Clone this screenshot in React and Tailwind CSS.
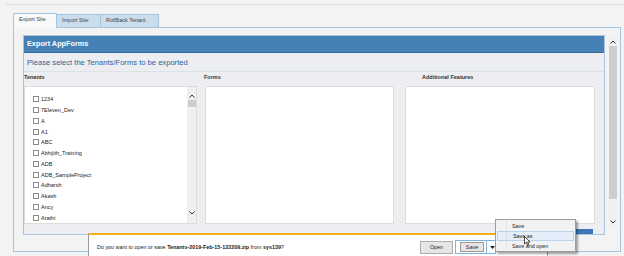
import React from "react";

const tenants = [
  "1234",
  "7Eleven_Dev",
  "A",
  "A1",
  "ABC",
  "Abhijith_Training",
  "ADB",
  "ADB_SampleProject",
  "Adharsh",
  "Akash",
  "Ancy",
  "Arathi",
];

function ChevUp({ className = "" }) {
  return (
    <svg width="6" height="4" viewBox="0 0 6 4" className={className}>
      <path d="M0.5 3.5 L3 1 L5.5 3.5" fill="none" stroke="#333" strokeWidth="1" />
    </svg>
  );
}
function ChevDown({ className = "" }) {
  return (
    <svg width="6" height="4" viewBox="0 0 6 4" className={className}>
      <path d="M0.5 0.5 L3 3 L5.5 0.5" fill="none" stroke="#333" strokeWidth="1" />
    </svg>
  );
}

export default function App() {
  return (
    <div className="relative w-[624px] h-[256px] overflow-hidden bg-[#f3f3f3] font-['Liberation_Sans',Arial,sans-serif] text-[#333]">
      <div className="ml-[6px] mt-[4px] h-px bg-[#dcdcdc]" />
      <div className="ml-[13px] mt-[8px]">
        {/* tabs */}
        <div className="relative z-10 flex items-end h-[15px]">
          <div className="w-[44px] h-[15px] border border-b-0 border-[#a3c6e0] bg-[#f8f8f8] pl-[5px] pt-[2px] text-[5.5px] leading-[7px] text-[#444]">
            Export Site
          </div>
          <div className="w-[44px] h-[14px] border border-l-0 border-[#a3c6e0] bg-[#c9dded] pl-[5px] pt-[2px] text-[5.5px] leading-[7px] text-[#444]">
            Import Site
          </div>
          <div className="w-[58px] h-[14px] border border-l-0 border-[#a3c6e0] bg-[#c9dded] pl-[5px] pt-[2px] text-[5.5px] leading-[7px] text-[#444]">
            RollBack Tenant
          </div>
        </div>
        {/* tab content */}
        <div className="-mt-px w-[608px] h-[225px] border border-[#a3c6e0] bg-[#f3f3f3] flex pl-[9px] pt-[7px]">
          <div className="w-[582px] h-[200px] border border-[#a9c4dc] bg-[#eceef2] flex flex-col">
            <div className="h-[17px] bg-[#4681b5] border-b border-[#3a6c9c] flex items-center pl-[3px] text-white font-bold text-[7.3px]">
              Export AppForms
            </div>
            <div className="h-[19px] border-b border-[#dde1e8] flex items-center pl-[3px] pt-[1px] text-[#2f5f9c] text-[7.6px]">
              Please select the Tenants/Forms to be exported
            </div>
            <div className="h-[14px] flex items-start pt-[2px] text-[5.5px] leading-[7px] font-bold text-[#333]">
              <div className="w-[180px]">Tenants</div>
              <div className="w-[218px]">Forms</div>
              <div>Additional Features</div>
            </div>
            <div className="h-[138px] flex">
              {/* tenants box */}
              <div className="w-[173px] h-[138px] bg-white border border-[#dcdcdc] flex">
                <div className="flex-1 pl-[8px] pt-[7px] flex flex-col">
                  {tenants.map((t) => (
                    <div key={t} className="h-[11px] flex items-center gap-[2px] text-[5.5px] text-[#222]">
                      <span className="w-[6px] h-[6px] border border-[#8a8a8a] bg-white shrink-0" />
                      <span>{t}</span>
                    </div>
                  ))}
                </div>
                <div className="w-[9px] bg-[#f0f0f0] flex flex-col items-center pt-[7px]">
                  <ChevUp />
                  <div className="mt-[2px] w-[8px] h-[7px] bg-[#cdcdcd]" />
                  <div className="flex-1" />
                  <ChevDown className="mb-[8px]" />
                </div>
              </div>
              {/* forms box */}
              <div className="ml-[8px] w-[189px] h-[138px] bg-white border border-[#dcdcdc]" />
              {/* additional box */}
              <div className="ml-[11px] w-[190px] h-[138px] bg-white border border-[#dcdcdc]" />
            </div>
          </div>
          {/* outer scrollbar */}
          <div className="ml-[4px] mt-[3px] w-[8px] h-[192px] bg-[#f0f0f0] flex flex-col items-center">
            <ChevUp className="mt-[2px]" />
            <div className="mt-[2px] w-[8px] h-[153px] bg-[#cdcdcd]" />
            <div className="flex-1" />
            <ChevDown className="mb-[6px]" />
          </div>
        </div>
      </div>

      {/* blue button peeking */}
      <div className="absolute left-[560px] top-[229px] w-[33px] h-[5px] bg-[#3b77b6]" />

      {/* download notification bar */}
      <div className="absolute left-[88px] top-[233px] w-[460px] h-[30px] bg-white border-l border-r border-[#9a9a9a] border-t-[2px] border-t-[#f2b01e]">
        <div className="absolute left-[8px] top-[9px] text-[5.4px] leading-[7px] text-[#222] whitespace-nowrap">
          Do you want to open or save <b>Tenants-2019-Feb-15-122209.zip</b> from <b>sys139</b>?
        </div>
        <div className="absolute left-[331px] top-[6px] w-[33px] h-[13px] border border-[#adadad] bg-[#e6e6e6] flex items-center justify-center text-[5.4px] text-[#222]">
          Open
        </div>
        <div className="absolute left-[366px] top-[5px] w-[41px] h-[14px] border border-[#7fb4e0] flex items-center pl-[4px] gap-[2px]">
          <div className="w-[24px] h-[10px] border border-[#9a9a9a] bg-[#e6e6e6] flex items-center justify-center text-[5.4px] text-[#222]">
            Save
          </div>
          <div className="w-px h-[12px] bg-[#7fb4e0]" />
          <svg width="5" height="3" viewBox="0 0 5 3" className="ml-[1px]">
            <path d="M0 0 L5 0 L2.5 3 Z" fill="#222" />
          </svg>
        </div>
      </div>

      {/* dropdown menu */}
      <div className="absolute left-[495px] top-[219px] w-[81px] h-[33px] bg-[#f2f2f2] border border-[#9c9c9c] shadow-[2px_2px_2px_rgba(0,0,0,0.35)] flex flex-col pt-[1px]">
        <div className="absolute left-[10px] top-[1px] bottom-[1px] w-px bg-[#e0e0e0]" />
        <div className="h-[10px] flex items-center pl-[16px] text-[5.4px] text-[#222]">Save</div>
        <div className="h-[10px] mx-[1px] flex items-center pl-[15px] text-[5.4px] text-[#222] bg-[#e3eefa] border border-[#b6d3ef]">
          Save as
        </div>
        <div className="h-[10px] flex items-center pl-[16px] text-[5.4px] text-[#222]">Save and open</div>
      </div>

      {/* mouse cursor */}
      <svg className="absolute left-[524px] top-[236px]" width="7" height="10" viewBox="0 0 7 10">
        <path d="M0.5 0.5 L0.5 8 L2.3 6.3 L3.6 9.3 L4.8 8.8 L3.6 5.9 L6 5.9 Z" fill="#fff" stroke="#000" strokeWidth="0.7" />
      </svg>
    </div>
  );
}
